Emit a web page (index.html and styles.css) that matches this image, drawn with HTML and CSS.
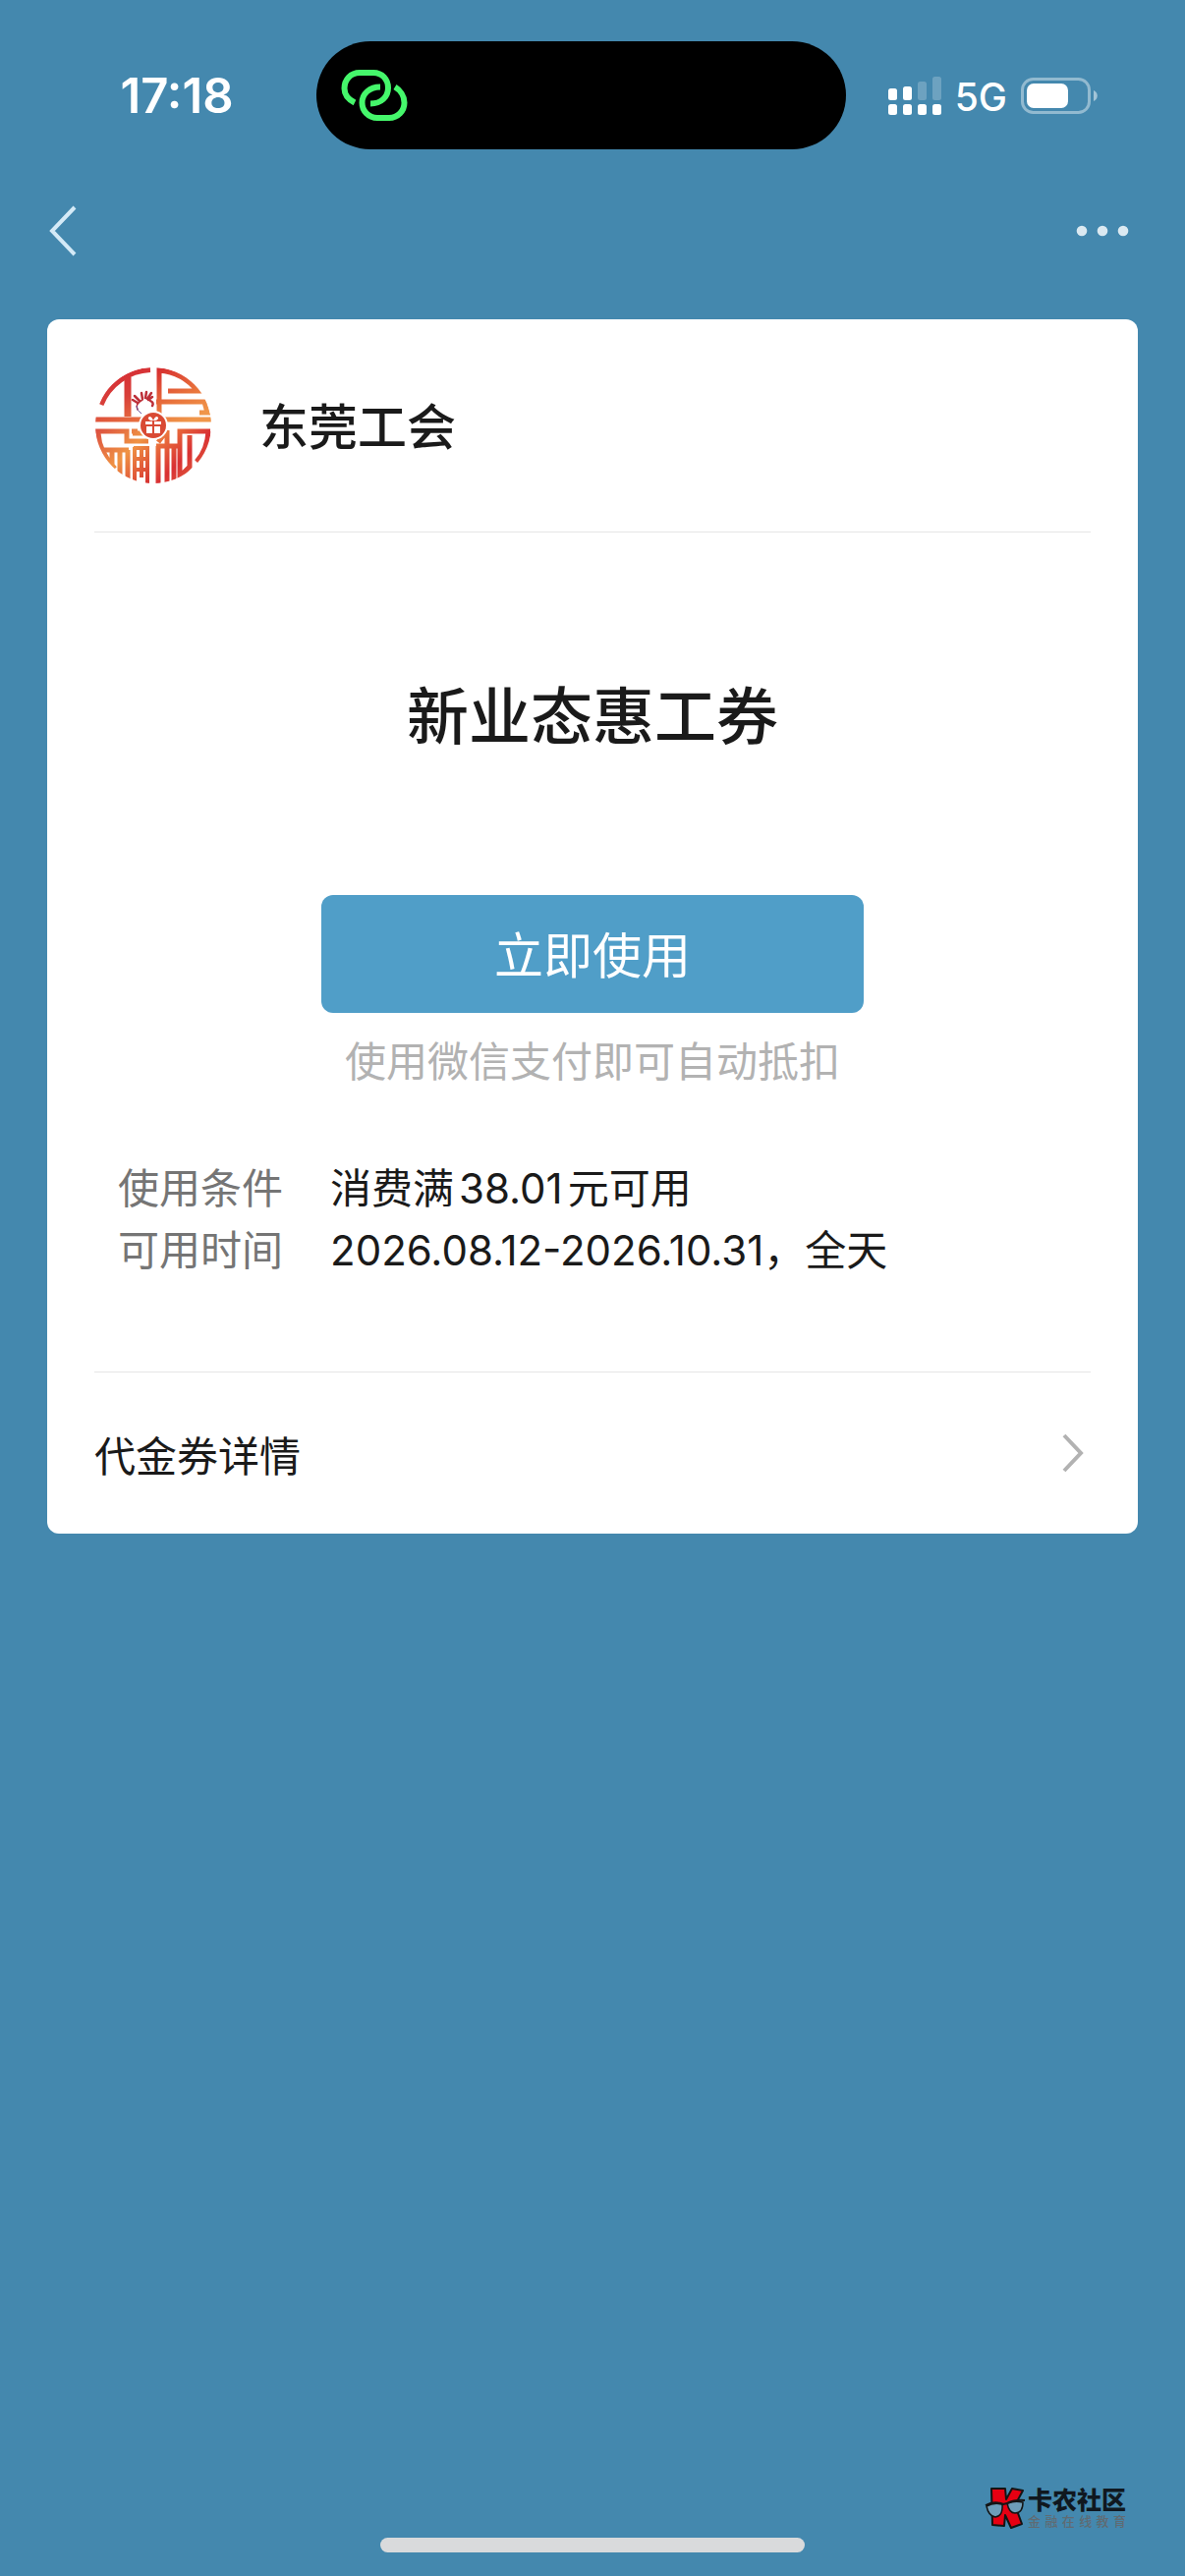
FILE: index.html
```html
<!DOCTYPE html>
<html lang="zh-CN">
<head>
<meta charset="utf-8">
<meta name="viewport" content="width=device-width, initial-scale=1">
<title>新业态惠工券</title>
<link rel="stylesheet" href="styles.css">
</head>
<body>
<div class="page">
  <div class="status">
    <time class="clock">17:18</time>
    <div class="island">
      <svg class="link-icon" viewBox="0 0 70 56" aria-hidden="true">
        <g fill="none" stroke="#45f76b" stroke-width="6">
          <path d="M15 35.500C8 32 4.500 27 4.500 21C4.500 12 11 5 20 5H34C43 5 49 12 49 20.500C49 29.500 42 36.500 31 36.500"/>
          <path d="M41 19.500C30 19.500 22.500 26.500 22.500 35.500C22.500 44 29 51 38 51H50C59 51 65.500 44 65.500 35.500C65.500 28.500 61 22.500 56 19.500"/>
        </g>
      </svg>
    </div>
    <div class="indicators">
      <svg class="signal" viewBox="0 0 54 39" aria-hidden="true">
        <g fill="#fff">
          <rect x="0" y="12" width="9" height="12" rx="2.500"/>
          <rect x="15" y="10" width="9" height="14" rx="2.500"/>
          <rect x="0" y="28" width="9" height="11" rx="2.500"/>
          <rect x="15" y="28" width="9" height="11" rx="2.500"/>
          <rect x="30" y="28" width="9" height="11" rx="2.500"/>
          <rect x="45" y="28" width="9" height="11" rx="2.500"/>
        </g>
        <g fill="#fff" opacity=".22">
          <rect x="30" y="5" width="9" height="19" rx="2.500"/>
          <rect x="45" y="0" width="9" height="24" rx="2.500"/>
        </g>
      </svg>
      <span class="network">5G</span>
      <svg class="battery" viewBox="0 0 78 37" aria-hidden="true">
        <rect x="1.500" y="1.500" width="68" height="34" rx="11" fill="none" stroke="#fff" stroke-opacity=".42" stroke-width="3"/>
        <rect x="6" y="6" width="42" height="25" rx="7" fill="#fff"/>
        <path d="M74 13C79 15 79 22 74 24Z" fill="#fff" opacity=".5"/>
      </svg>
    </div>
  </div>

  <nav class="nav">
    <button class="icon-button" type="button" aria-label="返回">
      <svg class="back" viewBox="0 0 28 52" aria-hidden="true"><path d="M26 2L3 26L26 50" fill="none" stroke="#d4eaf7" stroke-width="4"/></svg>
    </button>
    <button class="icon-button" type="button" aria-label="更多">
      <svg class="more" viewBox="0 0 54 12" aria-hidden="true"><g fill="#dbe9f1"><circle cx="6" cy="6" r="5.300"/><circle cx="27" cy="6" r="5.300"/><circle cx="48" cy="6" r="5.300"/></g></svg>
    </button>
  </nav>

  <main class="card">
    <header class="merchant">
      <svg class="avatar" viewBox="0 5 160 160" aria-hidden="true">
        <defs>
          <linearGradient id="tl" gradientUnits="userSpaceOnUse" x1="40" y1="25" x2="60" y2="80"><stop offset="0" stop-color="#d62c34"/><stop offset=".5" stop-color="#d8403a"/><stop offset="1" stop-color="#e8703f"/></linearGradient>
          <linearGradient id="tr" gradientUnits="userSpaceOnUse" x1="80" y1="25" x2="110" y2="80"><stop offset="0" stop-color="#d62c30"/><stop offset=".6" stop-color="#e9743c"/><stop offset="1" stop-color="#f0964a"/></linearGradient>
          <linearGradient id="bl" gradientUnits="userSpaceOnUse" x1="18" y1="88" x2="72" y2="142"><stop offset="0" stop-color="#dc5040"/><stop offset=".5" stop-color="#f09444"/><stop offset="1" stop-color="#d62f30"/></linearGradient>
          <linearGradient id="br" gradientUnits="userSpaceOnUse" x1="80" y1="88" x2="125" y2="135"><stop offset="0" stop-color="#f08a40"/><stop offset=".6" stop-color="#d93033"/><stop offset="1" stop-color="#e0603c"/></linearGradient>
          <clipPath id="disc"><circle cx="76" cy="83" r="59"/></clipPath>
        </defs>
        <g clip-path="url(#disc)" fill="none" stroke-width="5">
          <g stroke="url(#tl)">
            <path d="M73 26.500A56.500 56.500 0 0 0 23 62"/>
            <path d="M50 34V74" stroke-width="7"/>
            <path d="M17 77H66"/>
          </g>
          <g stroke="url(#tr)">
            <path d="M82 61V27A56 56 0 0 1 121 48H91"/>
            <path d="M79 59H128L131 70H123M82 59V72M88 77H135"/>
          </g>
          <g stroke="url(#bl)">
            <path d="M17 89H49V99H71M20 91Q21 110 37 127M54 89H60M55 91H70M26 108H51M42 108V134M50 108V140M34 108V126"/>
            <path d="M57 105V145M56 106H72M56 117H72M56 128H72M64 106V136M70 105V145" stroke-width="4"/>
          </g>
          <g stroke="url(#br)">
            <path d="M134 89H103V145M132 89Q131 108 120 120M113 93V125L103 135"/>
            <path d="M79 89H90M90 88L81 100M81 104V145M90 88V145M97 104V145M79 104H101"/>
          </g>
        </g>
        <circle cx="76" cy="83" r="15" fill="#fff"/>
        <circle cx="76" cy="83" r="13" fill="#d94a34"/>
        <path d="M68 79H75V82H68ZM77 79H84V82H77ZM69 84H75V91H69ZM77 84H83V91H77Z" fill="#fff"/>
        <path d="M76 78C71 79 69 74 73 74Q75 75 76 78Q77 75 79 74C83 74 81 79 76 78" fill="#fff"/>
        <g fill="none" stroke="#bd3039" stroke-width="2.500" stroke-linecap="round">
          <path d="M55 57L60 60M57 53L62 58M64 50L65 56M69 49L68 55M74 50L70 56M75 54L71 57M73 58Q77 60 75 63"/>
          <path d="M60 67Q57 61 65 57" stroke-width="1.500"/>
        </g>
        <path d="M59 63Q59 68 64 71" fill="none" stroke="#67529a" stroke-width="1"/>
      </svg>
      <span class="merchant-name">东莞工会</span>
    </header>

    <section class="coupon">
      <h1 class="title">新业态惠工券</h1>
      <button class="use" type="button">立即使用</button>
      <p class="note">使用微信支付即可自动抵扣</p>
      <dl class="terms">
        <dt>使用条件</dt><dd>消费满<span class="amount">38.01</span>元可用</dd>
        <dt>可用时间</dt><dd>2026.08.12-2026.10.31，全天</dd>
      </dl>
    </section>

    <a class="details" href="#details">
      <span>代金券详情</span>
      <svg class="chevron" viewBox="0 0 24 40" aria-hidden="true"><path d="M3 2L20 20L3 38" fill="none" stroke="#b2b2b2" stroke-width="4"/></svg>
    </a>
  </main>

  <footer class="footer">
    <div class="brand">
      <svg class="brand-mark" viewBox="0 0 42 44" aria-hidden="true">
        <path d="M7 2H21L22 13L28 2L39 4L31 19L38 38L27 42L21 29L20 40L8 39Z" fill="#e60012" stroke="#141414" stroke-width="2" stroke-linejoin="round"/>
        <path d="M2 20Q9 16 18 18Q19 30 11 31Q4 30 2 20ZM23 17Q31 14 39 16Q39 27 31 27Q25 27 23 17Z" fill="#6d9db8" stroke="#141414" stroke-width="1.500"/>
        <path d="M1 19Q10 14 19 18L23 17Q31 13 41 14" fill="none" stroke="#141414" stroke-width="2"/>
      </svg>
      <div class="brand-text">
        <strong class="brand-name">卡农社区</strong>
        <span class="brand-tag">金融在线教育</span>
      </div>
    </div>
    <div class="home-bar"></div>
  </footer>
</div>
</body>
</html>
```
FILE: styles.css
```css
* {
  box-sizing: border-box;
}

body {
  margin: 0;
  background: #4488ae;
  color: #1a1a1a;
  font-family: Inter, "Noto Sans CJK SC", sans-serif;
  font-size: 42px;
}

h1, p, dl, dd {
  margin: 0;
}

button {
  border: 0;
  padding: 0;
  background: none;
  font: inherit;
  cursor: pointer;
}

svg {
  display: block;
  flex: none;
}

.page {
  display: flex;
  flex-direction: column;
  min-height: 100vh;
}

/* Status bar */
.status {
  display: grid;
  grid-template-columns: 1fr 539px 1fr;
  align-items: center;
  padding: 42px 23px 0 0;
  color: #fff;
}

.clock {
  padding: 2px 0 0 38px;
  text-align: center;
  font-size: 49px;
  line-height: 56px;
  font-weight: 600;
}

.island {
  display: flex;
  align-items: center;
  height: 110px;
  padding-left: 24px;
  border-radius: 55px;
  background: #000;
}

.link-icon {
  width: 70px;
  height: 56px;
}

.indicators {
  display: flex;
  align-items: center;
  justify-content: flex-end;
  gap: 14px;
  padding-right: 66px;
}

.signal {
  width: 54px;
  height: 39px;
}

.network {
  padding-top: 4px;
  font-size: 39px;
  line-height: 48px;
  font-weight: 500;
}

.battery {
  width: 78px;
  height: 37px;
}

/* Navigation */
.nav {
  display: flex;
  align-items: center;
  justify-content: space-between;
  height: 173px;
  padding: 0 57px 8px 50px;
}

.back {
  width: 28px;
  height: 52px;
}

.more {
  width: 54px;
  height: 12px;
}

/* Voucher card */
.card {
  margin: 0 48px;
  padding: 0 48px;
  border-radius: 12px;
  background: #fff;
}

.merchant {
  display: flex;
  align-items: center;
  gap: 24px;
  height: 217px;
  padding-top: 4px;
  border-bottom: 1px solid #e5e5e5;
}

.avatar {
  width: 160px;
  height: 160px;
  margin-left: -16px;
}

.merchant-name {
  font-size: 50px;
  line-height: 72px;
  font-weight: 500;
}

.coupon {
  display: flex;
  flex-direction: column;
  align-items: center;
  padding: 142px 0 92px;
  border-bottom: 1px solid #e5e5e5;
}

.title {
  font-size: 63px;
  line-height: 90px;
  font-weight: 500;
}

.use {
  width: 552px;
  height: 120px;
  margin-top: 137px;
  padding-bottom: 4px;
  border-radius: 12px;
  background: #509ec8;
  color: #fff;
  font-size: 50px;
}

.note {
  margin-top: 18px;
  color: #b2b2b2;
  line-height: 63px;
}

.terms {
  display: grid;
  grid-template-columns: auto 1fr;
  column-gap: 48px;
  align-self: stretch;
  margin-top: 66px;
  padding: 0 24px;
  line-height: 63px;
}

.terms dt {
  color: #757575;
}

.amount {
  margin: 0 5px;
}

.details {
  display: flex;
  align-items: center;
  justify-content: space-between;
  height: 164px;
  padding-right: 6px;
  color: inherit;
  text-decoration: none;
}

.chevron {
  width: 24px;
  height: 40px;
}

/* Footer */
.footer {
  display: flex;
  flex-direction: column;
  gap: 8px;
  margin-top: auto;
  padding-bottom: 24px;
}

.brand {
  display: flex;
  align-items: center;
  align-self: flex-end;
  gap: 2px;
  margin-right: 60px;
}

.brand-mark {
  width: 42px;
  height: 44px;
}

.brand-text {
  display: flex;
  flex-direction: column;
}

.brand-name {
  color: #101820;
  font-size: 25px;
  line-height: 26px;
  font-weight: 900;
}

.brand-tag {
  color: #5f6b73;
  font-size: 13px;
  line-height: 16px;
  font-weight: 500;
  text-align-last: justify;
}

.home-bar {
  align-self: center;
  width: 432px;
  height: 15px;
  border-radius: 8px;
  background: #d9dadc;
}
```
